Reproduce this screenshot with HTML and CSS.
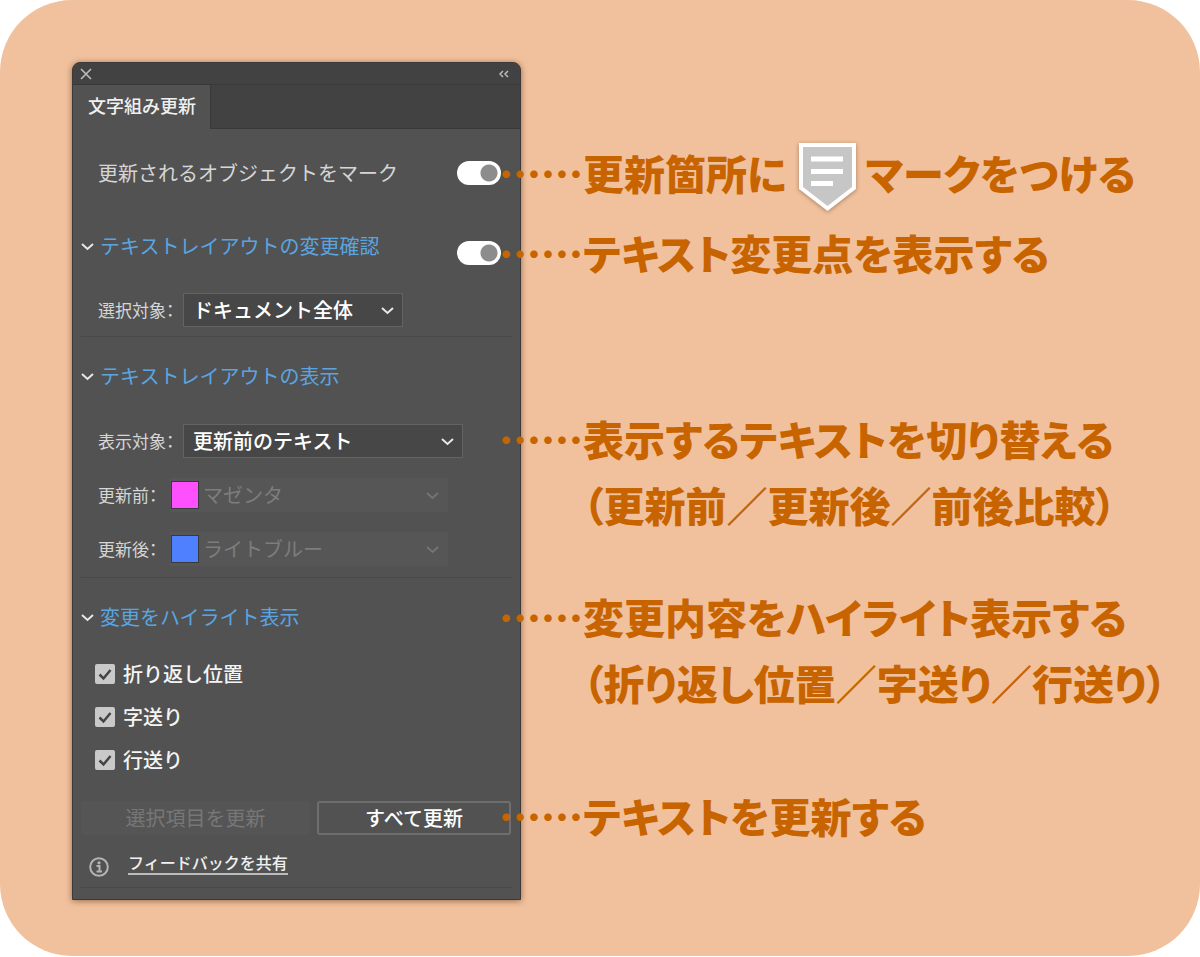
FILE: index.html
```html
<!DOCTYPE html>
<html lang="ja">
<head>
<meta charset="utf-8">
<meta name="viewport" content="width=device-width, initial-scale=1">
<title>文字組み更新</title>
<link rel="stylesheet" href="styles.css">
</head>
<body>
<main class="card">
  <section class="panel">
    <header class="titlebar">
      <button class="icon-button" type="button" aria-label="閉じる">
        <svg width="12" height="12" viewBox="0 0 12 12"><path d="M1 1 11 11M11 1 1 11" stroke-width="1.6"/></svg>
      </button>
      <button class="icon-button" type="button" aria-label="折りたたむ">
        <svg width="10" height="8" viewBox="0 0 10 8"><path d="M4 1 1 4 4 7M9 1 6 4 9 7" stroke-width="1.5"/></svg>
      </button>
    </header>
    <div class="tabs"><button class="tab" type="button">文字組み更新</button></div>

    <div class="row mark-row">
      <label for="mark">更新されるオブジェクトをマーク</label>
      <input class="switch" id="mark" type="checkbox" role="switch" checked>
    </div>

    <section class="group">
      <div class="row review-row">
        <h2 class="heading"><svg class="chevron" width="13" height="9" viewBox="0 0 13 9"><path d="M1 2 6.500 7 12 2"/></svg><label for="review">テキストレイアウトの変更確認</label></h2>
        <input class="switch" id="review" type="checkbox" role="switch" checked>
      </div>
      <div class="field target">
        <label for="scope">選択対象：</label>
        <span class="dropdown short">
          <select id="scope"><option>ドキュメント全体</option></select>
          <svg class="chevron" width="13" height="9" viewBox="0 0 13 9"><path d="M1 2 6.500 7 12 2"/></svg>
        </span>
      </div>
    </section>

    <section class="group display">
      <h2 class="heading"><svg class="chevron" width="13" height="9" viewBox="0 0 13 9"><path d="M1 2 6.500 7 12 2"/></svg>テキストレイアウトの表示</h2>
      <div class="fields">
        <div class="field">
          <label for="shown">表示対象：</label>
          <span class="dropdown long">
            <select id="shown"><option>更新前のテキスト</option></select>
            <svg class="chevron" width="13" height="9" viewBox="0 0 13 9"><path d="M1 2 6.500 7 12 2"/></svg>
          </span>
        </div>
        <div class="field">
          <label class="narrow" for="before">更新前：</label>
          <span class="dropdown off">
            <i class="swatch magenta"></i>
            <select id="before" disabled><option>マゼンタ</option></select>
            <svg class="chevron" width="13" height="9" viewBox="0 0 13 9"><path d="M1 2 6.500 7 12 2"/></svg>
          </span>
        </div>
        <div class="field">
          <label class="narrow" for="after">更新後：</label>
          <span class="dropdown off">
            <i class="swatch blue"></i>
            <select id="after" disabled><option>ライトブルー</option></select>
            <svg class="chevron" width="13" height="9" viewBox="0 0 13 9"><path d="M1 2 6.500 7 12 2"/></svg>
          </span>
        </div>
      </div>
    </section>

    <section class="highlight">
      <h2 class="heading"><svg class="chevron" width="13" height="9" viewBox="0 0 13 9"><path d="M1 2 6.500 7 12 2"/></svg>変更をハイライト表示</h2>
      <div class="checks">
        <label class="check"><input type="checkbox" checked><svg width="20" height="20" viewBox="0 0 20 20"><path d="M4.500 10.500 8.500 14.500 15.500 6"/></svg>折り返し位置</label>
        <label class="check"><input type="checkbox" checked><svg width="20" height="20" viewBox="0 0 20 20"><path d="M4.500 10.500 8.500 14.500 15.500 6"/></svg>字送り</label>
        <label class="check"><input type="checkbox" checked><svg width="20" height="20" viewBox="0 0 20 20"><path d="M4.500 10.500 8.500 14.500 15.500 6"/></svg>行送り</label>
      </div>
    </section>

    <div class="actions">
      <button class="action" type="button" disabled>選択項目を更新</button>
      <button class="action primary" type="button">すべて更新</button>
    </div>
    <footer class="feedback">
      <svg width="20" height="20" viewBox="0 0 20 20"><circle cx="10" cy="10" r="8.800"/><circle class="dot" cx="10" cy="5.800" r="1.600"/><path d="M7.500 9H10.500V14.500M7.500 14.500H13"/></svg>
      <a href="#feedback">フィードバックを共有</a>
    </footer>
  </section>

  <aside class="notes">
    <p class="note"><span class="dots">……</span><span>更新箇所に</span><svg class="marker" width="66" height="76" viewBox="0 0 66 76"><path class="rim" d="M4 4H61V50L32.500 72 4 50Z"/><path class="fill" d="M8 8H57V48L32.500 67 8 48Z"/><path class="lines" d="M16 20H48M16 32.500H48M16 44.500H38"/></svg><span>マークをつける</span></p>
    <p class="note second"><span class="dots">……</span><span>テキスト変更点を表示する</span></p>
    <p class="note third"><span class="dots">……</span><span>表示するテキストを切り替える<br>（更新前／更新後／前後比較）</span></p>
    <p class="note fourth"><span class="dots">……</span><span>変更内容をハイライト表示する<br>（折り返し位置／字送り／行送り）</span></p>
    <p class="note fifth"><span class="dots">……</span><span>テキストを更新する</span></p>
  </aside>
</main>
</body>
</html>
```
FILE: styles.css
```css
* {
  box-sizing: border-box;
}

body {
  margin: 0;
  background: #fff;
  color: #d6d6d6;
  font: 20px/30px "Noto Sans CJK JP", sans-serif;
}

h2,
p {
  margin: 0;
}

button,
select {
  font: inherit;
  color: inherit;
}

svg {
  flex: none;
  fill: none;
  stroke: currentColor;
}

.card {
  display: flex;
  align-items: flex-start;
  min-height: 956px;
  padding: 62px 0 56px 72px;
  border-radius: 72px;
  background: #f1c19d;
}

.panel {
  flex: none;
  width: 449px;
  padding-bottom: 11px;
  border: 1px solid #3c3938;
  border-radius: 8px 8px 0 0;
  background: #525252;
  box-shadow: 0 1px 6px rgba(90, 50, 20, 0.6);
}

.titlebar {
  display: flex;
  align-items: center;
  justify-content: space-between;
  height: 22px;
  padding: 0 11px 0 7px;
  border-bottom: 1px solid #393939;
  border-radius: 7px 7px 0 0;
  background: #424242;
  color: #bdbdbd;
}

.icon-button {
  display: flex;
  padding: 0;
  border: 0;
  background: none;
}

.tabs {
  display: flex;
  height: 44px;
  background: #424242;
  box-shadow: inset 0 -1px #393939;
}

.tab {
  padding: 0 14px 4px 15px;
  border: 0;
  border-right: 1px solid #393939;
  background: #525252;
  color: #f0f0f0;
  font-size: 18px;
  font-weight: 500;
}

.row {
  display: flex;
  align-items: center;
  justify-content: space-between;
}

.mark-row {
  padding: 29px 19px 43px 25px;
}

.switch {
  appearance: none;
  flex: none;
  width: 44px;
  height: 24px;
  margin: 0;
  border-radius: 12px;
  background: radial-gradient(circle at 32px 12px, #8c8c8c 8px, #fff 9px);
}

.heading {
  display: flex;
  align-items: center;
  gap: 6px;
  padding-left: 8px;
  color: #5aa5e0;
  font-size: 20px;
  font-weight: 400;
}

.chevron {
  color: #e8e8e8;
  stroke-width: 2;
}

.group {
  margin: 0 8px;
  border-bottom: 1px solid #494949;
}

.group .heading {
  padding-left: 0;
}

.group .row {
  align-items: flex-end;
  height: 34px;
  padding-right: 11px;
}

.review-row .heading {
  align-self: flex-start;
}

.field {
  display: flex;
  align-items: center;
  padding-left: 17px;
  font-size: 17px;
}

.field label {
  width: 85px;
  white-space: nowrap;
  font-feature-settings: "palt";
}

.field .narrow {
  width: 72px;
}

.target {
  padding-top: 28px;
  padding-bottom: 9px;
}

.dropdown {
  display: flex;
  align-items: center;
  height: 34px;
  padding: 0 8px 0 9px;
  border: 1px solid #636363;
  background: #474747;
  color: #fff;
  font-size: 20px;
  font-weight: 500;
}

.dropdown select {
  appearance: none;
  flex: 1;
  min-width: 0;
  height: 32px;
  padding: 0;
  border: 0;
  background: none;
  opacity: 1;
}

.short {
  width: 220px;
}

.long {
  width: 280px;
}

.off {
  width: 278px;
  padding: 0 8px 0 0;
  gap: 4px;
  border-color: #565656;
  background: #565656;
  color: #7d7d7d;
  font-weight: 400;
}

.off .chevron {
  color: #747474;
}

.swatch {
  width: 28px;
  height: 28px;
  border: 1px solid #3a3a3a;
}

.magenta {
  background: #ff50ff;
}

.blue {
  background: #4f80ff;
}

.display {
  padding: 24px 0 11px;
}

.fields {
  display: grid;
  gap: 20px;
  padding-top: 33px;
}

.highlight {
  padding-top: 24px;
}

.checks {
  display: grid;
  gap: 13px;
  padding: 27px 0 0 22px;
}

.check {
  display: flex;
  align-items: center;
  gap: 8px;
  color: #f4f4f4;
  font-weight: 500;
}

.check input {
  appearance: none;
  width: 20px;
  height: 20px;
  margin: 0 -28px 0 0;
  border-radius: 2px;
  background: #c9c9c9;
}

.check svg {
  z-index: 1;
  color: #444;
  stroke-width: 2.5;
}

.actions {
  display: grid;
  grid-template-columns: 229px 194px;
  gap: 7px;
  padding: 26px 0 0 8px;
}

.action {
  height: 34px;
  padding: 0;
  border: 1px solid #555;
  border-radius: 2px;
  background: #555;
  color: #777;
}

.primary {
  border: 2px solid #6e6e6e;
  border-radius: 3px;
  background: none;
  color: #fff;
  font-weight: 500;
}

.feedback {
  display: flex;
  align-items: flex-end;
  gap: 19px;
  margin: 0 8px;
  padding: 16px 0 10px 8px;
  border-bottom: 1px solid #494949;
  color: #b4b4b4;
  stroke-width: 2;
}

.feedback .dot {
  fill: currentColor;
  stroke: none;
}

.feedback a {
  margin-bottom: 2px;
  border-bottom: 2px solid #bcbcbc;
  color: #f0f0f0;
  font-size: 16px;
  font-weight: 500;
  line-height: 22px;
  text-decoration: none;
}

.notes {
  z-index: 1;
  margin-left: -22px;
  padding-top: 77px;
  color: #c86400;
  font-size: 41px;
  font-weight: 900;
  line-height: 66px;
  white-space: nowrap;
  font-feature-settings: "palt";
}

.note {
  display: flex;
}

.dots {
  width: 84px;
  font-size: 42px;
  font-feature-settings: normal;
}

.marker {
  align-self: center;
  margin: 0 5px 0 8px;
}

.rim {
  fill: #fff;
  stroke: none;
  filter: drop-shadow(0 1px 2px rgba(90, 60, 40, 0.5));
}

.fill {
  fill: #c6c6c6;
  stroke: none;
}

.lines {
  stroke: #fff;
  stroke-width: 5;
}

.second {
  padding-top: 4px;
}

.third {
  padding-top: 120px;
}

.fourth {
  padding-top: 46px;
}

.fifth {
  padding-top: 67px;
}
```
